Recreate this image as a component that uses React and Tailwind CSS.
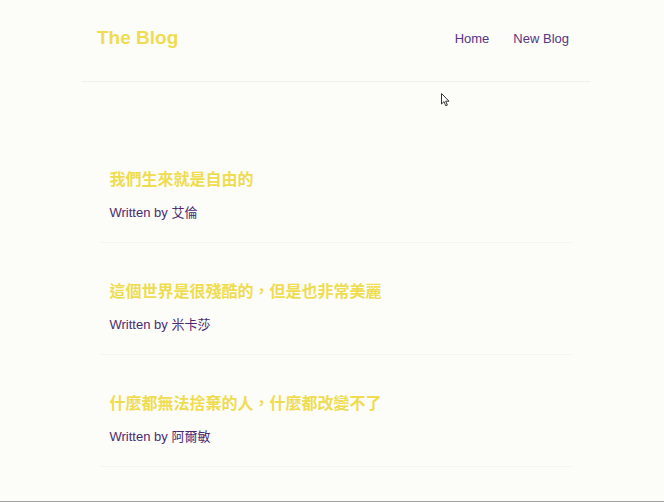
const posts = [
  { title: '我們生來就是自由的', author: '艾倫' },
  { title: '這個世界是很殘酷的，但是也非常美麗', author: '米卡莎' },
  { title: '什麼都無法捨棄的人，什麼都改變不了', author: '阿爾敏' },
];

export default function App() {
  return (
    <div
      className="relative h-[502px] overflow-hidden bg-[#fcfcf9] border-b border-[#a3a3a3] pl-[8px]"
      style={{ fontFamily: '"Liberation Sans", "Noto Sans CJK TC", sans-serif' }}
    >
      {/* Navbar */}
      <nav className="mx-auto flex h-[82px] w-[508px] items-center justify-between border-b border-[#f0f0ee] px-[15px] pb-[4px]">
        <h1 className="text-[19px] font-bold text-[#efdc50]">The Blog</h1>
        <div className="flex items-center gap-[24px] pr-[6px] text-[13px] text-[#553584]">
          <a href="#">Home</a>
          <a href="#">New Blog</a>
        </div>
      </nav>

      {/* Blog list */}
      <div className="mx-auto mt-[68px] flex w-[475px] flex-col gap-[19px]">
        {posts.map((post) => (
          <div key={post.title} className="border-b border-[#f5f5f1] px-[11px] py-[19px]">
            <h2 className="mb-[12px] text-[16px] font-bold leading-[22px] text-[#efdc50]">
              {post.title}
            </h2>
            <p className="text-[13px] leading-[20px] text-[#4a2a72]">Written by {post.author}</p>
          </div>
        ))}
      </div>

      {/* mouse pointer */}
      <svg className="absolute left-[441px] top-[93px]" width="10" height="14" viewBox="0 0 10 14">
        <path d="M0.5 0.5 L0.5 11 L3 8.6 L4.8 12.8 L6.4 12.1 L4.7 8.2 L8 8.2 Z" fill="#fff" stroke="#333" strokeWidth="1" strokeLinejoin="round" />
      </svg>
    </div>
  );
}
